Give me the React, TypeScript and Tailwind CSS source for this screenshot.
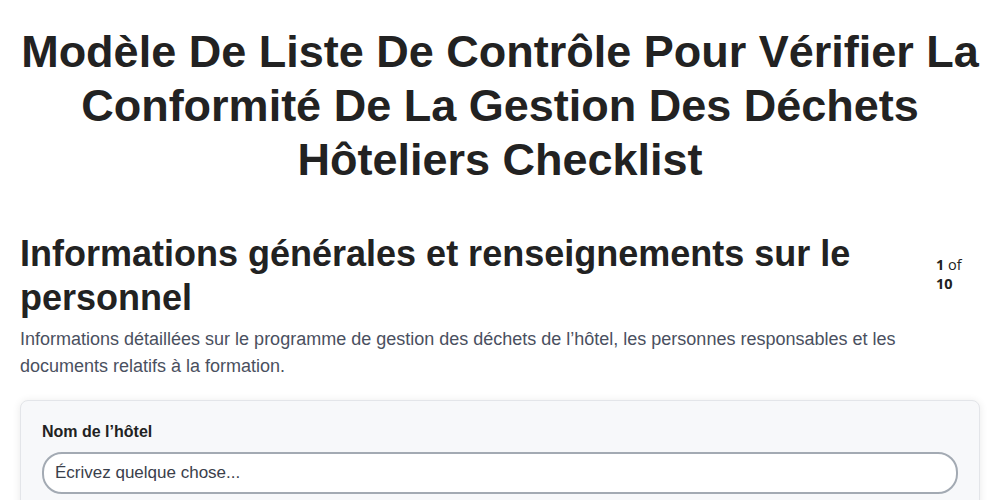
export default function App() {
  return (
    <div className="min-h-screen bg-white text-[#222] font-['Liberation_Sans',Arial,sans-serif]">
      <div className="px-5 pt-[25px]">
        {/* Title */}
        <h1 className="text-center text-[45px] font-bold leading-[54px]">
          Modèle De Liste De Contrôle Pour Vérifier La Conformité De La Gestion Des Déchets Hôteliers Checklist
        </h1>

        {/* Section header */}
        <div className="mt-[45px] flex items-start justify-between gap-6">
          <h2 className="text-[36px] font-bold leading-[44px] max-w-[860px]">
            Informations générales et renseignements sur le personnel
          </h2>
          <div className="w-[42px] shrink-0 mt-[23px] mr-[2px] text-[14.5px] leading-[19px] font-['Open_Sans',sans-serif]">
            <span className="font-bold">1</span> of <span className="font-bold">10</span>
          </div>
        </div>
        <p className="mt-[6px] text-[18px] leading-[27px] text-[#4a5060]">
          Informations détaillées sur le programme de gestion des déchets de l’hôtel, les personnes responsables et les documents relatifs à la formation.
        </p>

        {/* Card */}
        <div className="mt-[20px] rounded-lg border border-[#e3e5e9] bg-[#f7f8fa] px-[21px] pt-[21px] pb-6 shadow-[0_1px_8px_rgba(0,0,0,0.09)]">
          <label className="block text-[16px] font-bold leading-5">Nom de l’hôtel</label>
          <input
            className="mt-[10px] w-full h-[42px] rounded-[20px] border-2 border-[#a3aab3] bg-white px-[11px] text-[17px] text-[#333] placeholder-[#3a404b] outline-none"
            placeholder="Écrivez quelque chose..."
          />
        </div>
      </div>
    </div>
  )
}
